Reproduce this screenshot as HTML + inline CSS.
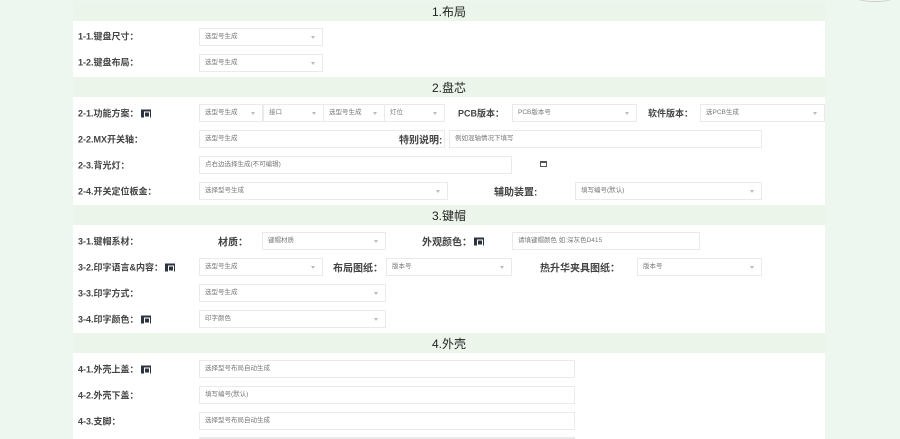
<!DOCTYPE html>
<html style="width:900px;height:439px;overflow:hidden"><head><meta charset="utf-8"><style>
*{margin:0;padding:0;box-sizing:border-box}
body{width:900px;height:439px;overflow:hidden;background:#eef7ef;font-family:"Liberation Sans","Noto Sans CJK SC",sans-serif;position:relative}
.band{position:absolute;left:73px;width:752px;height:20px;background:#ebf5ea;text-align:center;font-size:12px;color:#222;line-height:22px}
.panel{position:absolute;left:73px;width:752px;background:#fff}
.l{position:absolute;font-size:9px;color:#444;font-weight:bold;white-space:nowrap;transform:translateY(-50%)}
.i{position:absolute;height:18px;border:1px solid #eaeaea;background:#fff;font-size:6.5px;color:#777;line-height:16px;padding-left:5px;white-space:nowrap;overflow:hidden}
.s::after{content:"";position:absolute;right:7px;top:7px;border:2.5px solid transparent;border-top:3px solid #bbb}
.b{display:inline-block;width:10px;height:8px;background:#2c3440;vertical-align:middle;margin-left:2px;position:relative;top:-1px}
.b::after{content:"";position:absolute;left:3px;top:2px;width:4px;height:4px;border:1px solid #fff}
</style></head><body>
<div style="position:absolute;left:855px;top:-8px;width:40px;height:10px;border-radius:50%;border-bottom:1px solid #ccc"></div>
<div class="band" style="top:1px">1.布局</div>
<div class="panel" style="top:21px;height:56px"></div>
<div class="band" style="top:77px">2.盘芯</div>
<div class="panel" style="top:97px;height:108px"></div>
<div class="band" style="top:205px">3.键帽</div>
<div class="panel" style="top:225px;height:108px"></div>
<div class="band" style="top:333px">4.外壳</div>
<div class="panel" style="top:353px;height:86px"></div>

<div class="l" style="left:78px;top:36px">1-1.键盘尺寸：</div>
<div class="i s" style="left:199px;top:28px;width:124px">选型号生成</div>
<div class="l" style="left:78px;top:62px">1-2.键盘布局：</div>
<div class="i s" style="left:199px;top:54px;width:124px">选型号生成</div>

<div class="l" style="left:78px;top:113px">2-1.功能方案：<span class="b"></span></div>
<div class="i s" style="left:199px;top:104px;width:64px">选型号生成</div>
<div class="i s" style="left:263px;top:104px;width:61px">接口</div>
<div class="i s" style="left:323px;top:104px;width:62px">选型号生成</div>
<div class="i s" style="left:384px;top:104px;width:61px">灯位</div>
<div class="l" style="left:458px;top:113px">PCB版本：</div>
<div class="i s" style="left:512px;top:104px;width:125px">PCB版本号</div>
<div class="l" style="left:648px;top:113px">软件版本：</div>
<div class="i s" style="left:700px;top:104px;width:125px">选PCB生成</div>

<div class="l" style="left:78px;top:139px">2-2.MX开关轴：</div>
<div class="i s" style="left:199px;top:130px;width:246px">选型号生成</div>
<div class="l" style="left:399px;top:139px;font-size:10px">特别说明:</div>
<div class="i" style="left:449px;top:130px;width:313px">例如混轴情况下填写</div>

<div class="l" style="left:78px;top:165px">2-3.背光灯：</div>
<div class="i" style="left:199px;top:156px;width:313px">点右边选择生成(不可编辑)</div>
<div style="position:absolute;left:540px;top:161px;width:7px;height:6px;border:1px solid #555;border-top-width:2px"></div>

<div class="l" style="left:78px;top:191px">2-4.开关定位板金：</div>
<div class="i s" style="left:199px;top:182px;width:249px">选择型号生成</div>
<div class="l" style="left:494px;top:191px;font-size:10px">辅助装置:</div>
<div class="i s" style="left:575px;top:182px;width:187px">填写编号(默认)</div>

<div class="l" style="left:78px;top:241px">3-1.键帽系材：</div>
<div class="l" style="left:218px;top:241px;font-size:10px">材质：</div>
<div class="i s" style="left:262px;top:232px;width:124px">键帽材质</div>
<div class="l" style="left:422px;top:241px;font-size:10px">外观颜色：<span class="b"></span></div>
<div class="i" style="left:512px;top:232px;width:188px">请填键帽颜色 如:深灰色D415</div>

<div class="l" style="left:78px;top:267px">3-2.印字语言&amp;内容：<span class="b"></span></div>
<div class="i s" style="left:199px;top:258px;width:124px">选型号生成</div>
<div class="l" style="left:333px;top:267px;font-size:10px">布局图纸：</div>
<div class="i s" style="left:386px;top:258px;width:126px">版本号</div>
<div class="l" style="left:540px;top:267px;font-size:10px">热升华夹具图纸：</div>
<div class="i s" style="left:637px;top:258px;width:125px">版本号</div>

<div class="l" style="left:78px;top:293px">3-3.印字方式：</div>
<div class="i s" style="left:199px;top:284px;width:187px">选型号生成</div>
<div class="l" style="left:78px;top:319px">3-4.印字颜色：<span class="b"></span></div>
<div class="i s" style="left:199px;top:310px;width:187px">印字颜色</div>

<div class="l" style="left:78px;top:369px">4-1.外壳上盖：<span class="b"></span></div>
<div class="i" style="left:199px;top:360px;width:376px">选择型号布局自动生成</div>
<div class="l" style="left:78px;top:395px">4-2.外壳下盖：</div>
<div class="i" style="left:199px;top:386px;width:376px">填写编号(默认)</div>
<div class="l" style="left:78px;top:421px">4-3.支脚：</div>
<div class="i" style="left:199px;top:412px;width:376px">选择型号布局自动生成</div>
<div class="i" style="left:199px;top:437px;width:376px;height:2px"></div>
</body></html>
